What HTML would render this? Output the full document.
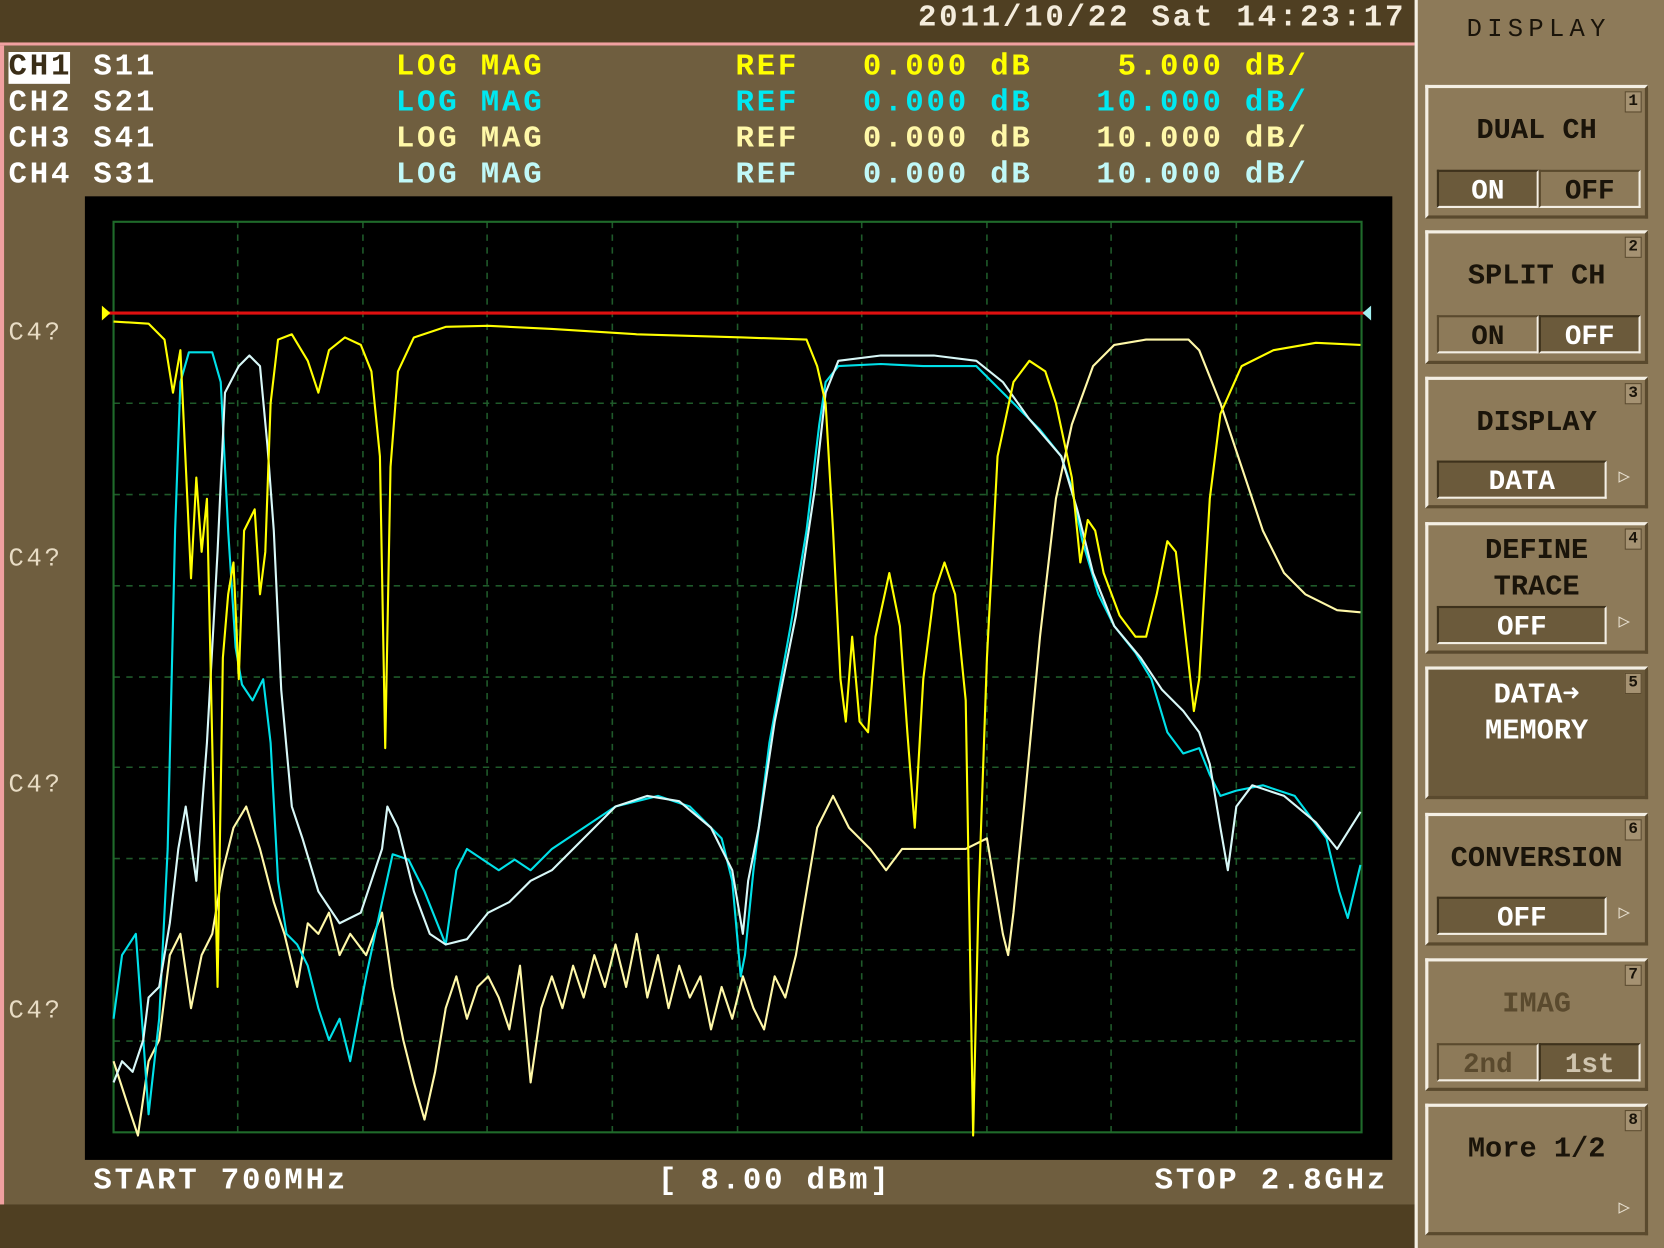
<!DOCTYPE html>
<html><head><meta charset="utf-8"><style>
html,body{margin:0;padding:0;width:1664px;height:1248px;overflow:hidden;background:#4f3f22}
#s{position:absolute;left:0;top:0;width:1568px;height:1176px;transform:scale(1.06122);transform-origin:0 0;font-family:"Liberation Mono",monospace;font-weight:bold}
.t{position:absolute;font-size:29px;line-height:34px;white-space:pre;letter-spacing:2.6px}
.box{position:absolute;left:1343px;width:210px;background:#8d7a59;border-top:3px solid #f4efe4;border-left:3px solid #f4efe4;border-right:3px solid #5a4a2e;border-bottom:3px solid #5a4a2e;box-sizing:border-box}
.box.dk{background:#6b5a3b}
.lbl{position:absolute;left:0;right:0;text-align:center;font-size:27px;color:#1a140a;line-height:34px}
.num{position:absolute;right:3px;top:3px;width:14px;height:18px;font-size:15px;line-height:18px;color:#1a140a;background:#a59272;border:1px solid #5a4a2e;text-align:center}
.btn{position:absolute;height:36px;font-size:26px;line-height:36px;text-align:center;box-sizing:border-box;color:#1a140a;background:#8d7a59;border-top:2px solid #5a4a2e;border-left:2px solid #5a4a2e;border-right:2px solid #f4efe4;border-bottom:2px solid #f4efe4}
.btn.on{background:#6b5a3b;color:#fff;border-top:2px solid #3e321c;border-left:2px solid #3e321c}
.arr{position:absolute;right:14px;font-size:18px;color:#e8e0d0}
</style></head><body><div id="s">
<div style="position:absolute;left:0;top:0;width:1336px;height:40px;background:#4f3f22"></div>
<div class="t" style="left:865px;top:0px;color:#f4ecdc">2011/10/22 Sat 14:23:17</div>
<div style="position:absolute;left:0;top:40px;width:1333px;height:3px;background:#f0a0a0"></div>
<div style="position:absolute;left:0;top:43px;width:4px;height:1092px;background:#f0a0a0"></div>
<div style="position:absolute;left:4px;top:43px;width:1329px;height:1092px;background:#6f5e3f"></div>
<div style="position:absolute;left:0;top:1135px;width:1336px;height:41px;background:#4f3f22"></div>
<div style="position:absolute;left:1333px;top:0;width:235px;height:1176px;background:#8d7a59;border-left:3px solid #f4efe4;box-sizing:border-box"></div>

<div style="position:absolute;left:8px;top:49px;width:58px;height:30px;background:#fff"></div>
<div class="t" style="left:8px;top:46px;color:#3a2e18">CH1</div>
<div class="t" style="left:8px;top:80px;color:#fff">CH2</div>
<div class="t" style="left:8px;top:114px;color:#fff">CH3</div>
<div class="t" style="left:8px;top:148px;color:#fff">CH4</div>
<div class="t" style="left:88px;top:46px;color:#fff">S11</div>
<div class="t" style="left:88px;top:80px;color:#fff">S21</div>
<div class="t" style="left:88px;top:114px;color:#fff">S41</div>
<div class="t" style="left:88px;top:148px;color:#fff">S31</div>
<div class="t" style="left:373px;top:46px;color:#ffff00">LOG MAG         REF   0.000 dB    5.000 dB/</div>
<div class="t" style="left:373px;top:80px;color:#00e8f0">LOG MAG         REF   0.000 dB   10.000 dB/</div>
<div class="t" style="left:373px;top:114px;color:#fff8a8">LOG MAG         REF   0.000 dB   10.000 dB/</div>
<div class="t" style="left:373px;top:148px;color:#c0f8f8">LOG MAG         REF   0.000 dB   10.000 dB/</div>

<div class="t" style="left:8px;top:298px;color:#e8dcc4;font-weight:normal;font-size:24px">C4?</div>
<div class="t" style="left:8px;top:511px;color:#e8dcc4;font-weight:normal;font-size:24px">C4?</div>
<div class="t" style="left:8px;top:724px;color:#e8dcc4;font-weight:normal;font-size:24px">C4?</div>
<div class="t" style="left:8px;top:937px;color:#e8dcc4;font-weight:normal;font-size:24px">C4?</div>

<svg style="position:absolute;left:0;top:0" width="1568" height="1176">
<rect x="80" y="185" width="1232" height="908" fill="#000"/>
<g stroke="#1f5a2a" stroke-width="1.5" stroke-dasharray="6 6" fill="none">
<path d="M224 209V1067M342 209V1067M459 209V1067M577 209V1067M695 209V1067M812 209V1067M930 209V1067M1047 209V1067M1165 209V1067M107 295H1283M107 380H1283M107 466H1283M107 552H1283M107 638H1283M107 723H1283M107 809H1283M107 895H1283M107 981H1283"/>
</g>
<rect x="107" y="209" width="1176" height="858" stroke="#1f6a2a" stroke-width="2" fill="none"/>
<line x1="100" y1="295" x2="1288" y2="295" stroke="#e01010" stroke-width="3"/>
<path d="M96 288L104 295L96 302Z" fill="#ffff00"/><path d="M1292 288L1284 295L1292 302Z" fill="#a0f0f0"/>
<g fill="none" stroke-width="2" stroke-linejoin="round">
<polyline stroke="#fff8a8" points="107,1000 120,1040 130,1070 140,1000 150,980 160,900 170,880 180,950 190,900 200,880 210,820 220,780 232,760 245,800 258,850 268,880 280,930 290,870 300,880 310,860 320,900 330,880 345,900 360,860 370,930 380,980 390,1020 400,1055 410,1010 420,950 430,920 440,960 450,930 460,920 470,940 480,970 490,910 500,1020 510,950 520,920 530,950 540,910 550,940 560,900 570,930 580,890 590,930 600,880 610,940 620,900 630,950 640,910 650,940 660,920 670,970 680,930 690,960 700,920 710,950 720,970 730,920 740,940 750,900 760,840 770,780 785,750 800,780 820,800 835,820 850,800 870,800 890,800 910,800 930,790 945,880 950,900 955,860 965,760 980,600 995,470 1010,400 1030,345 1050,325 1080,320 1120,320 1130,330 1150,380 1170,440 1190,500 1210,540 1230,560 1260,575 1282,577"/>
<polyline stroke="#00e0e8" points="107,960 115,900 128,880 133,950 140,1050 150,960 158,800 165,500 170,360 178,332 200,332 208,360 215,500 222,610 228,645 238,660 248,640 255,700 262,830 270,880 280,890 290,910 300,950 310,980 320,960 330,1000 345,920 360,850 370,805 385,810 400,840 420,890 430,820 440,800 455,810 470,820 485,810 500,820 520,800 550,780 580,760 620,750 650,760 680,790 690,830 698,920 702,900 710,820 725,700 745,590 760,500 772,400 778,360 790,345 830,343 870,345 920,345 940,365 960,385 980,405 1000,430 1010,460 1020,510 1035,560 1050,590 1070,615 1085,640 1100,690 1115,710 1130,705 1140,730 1150,750 1165,745 1190,740 1220,750 1250,790 1262,840 1270,865 1282,815"/>
<polyline stroke="#d8f8f8" points="107,1020 115,1000 125,1010 135,980 140,940 150,930 160,870 168,800 175,760 185,830 195,700 205,520 212,370 225,345 235,335 245,345 252,420 258,500 265,650 275,760 285,790 300,840 320,870 340,860 360,800 365,760 375,780 390,840 405,880 420,890 440,885 460,860 480,850 500,830 520,820 550,790 580,760 610,750 640,755 670,780 690,820 700,880 705,830 715,780 730,680 750,580 768,460 778,370 790,340 830,335 880,335 920,340 945,360 970,395 1000,430 1015,480 1030,540 1050,590 1075,620 1095,650 1115,670 1130,690 1140,720 1150,780 1157,820 1165,760 1180,740 1210,750 1240,775 1260,800 1282,765"/>
<polyline stroke="#ffff00" points="107,303 140,305 155,320 163,370 170,330 180,545 185,450 190,520 195,470 200,700 205,930 210,620 215,560 220,530 225,640 230,500 240,480 245,560 250,520 255,380 262,320 275,315 290,340 300,370 310,330 325,318 340,325 350,350 358,430 363,705 368,440 375,350 390,318 420,308 460,307 520,310 600,315 700,318 760,320 770,345 778,380 785,500 792,640 797,680 803,600 810,680 818,690 825,600 838,540 848,590 855,690 862,780 870,640 880,560 890,530 900,560 910,660 917,1070 922,850 930,620 940,430 955,360 970,340 985,350 995,380 1010,450 1018,530 1025,490 1032,500 1040,540 1055,580 1070,600 1080,600 1090,560 1100,510 1108,520 1115,580 1125,670 1130,640 1140,470 1150,390 1170,345 1200,330 1240,323 1282,325"/>
</g>
</svg>
<div class="t" style="left:88px;top:1096px;color:#fff">START 700MHz</div>
<div class="t" style="left:620px;top:1096px;color:#fff">[ 8.00 dBm]</div>
<div class="t" style="left:1088px;top:1096px;color:#fff">STOP 2.8GHz</div>

<div class="t" style="left:1382px;top:12px;color:#1a140a;font-weight:normal;font-size:24px;letter-spacing:5px">DISPLAY</div>

<div class="box" style="top:80px;height:126px"><div class="num">1</div><div class="lbl" style="top:24px">DUAL CH</div>
<div class="btn on" style="left:8px;top:77px;width:96px">ON</div><div class="btn" style="left:104px;top:77px;width:96px">OFF</div></div>
<div class="box" style="top:217px;height:126px"><div class="num">2</div><div class="lbl" style="top:24px">SPLIT CH</div>
<div class="btn" style="left:8px;top:77px;width:96px">ON</div><div class="btn on" style="left:104px;top:77px;width:96px">OFF</div></div>
<div class="box" style="top:355px;height:124px"><div class="num">3</div><div class="lbl" style="top:24px">DISPLAY</div>
<div class="btn on" style="left:8px;top:76px;width:160px">DATA</div><div class="arr" style="top:80px">▷</div></div>
<div class="box" style="top:492px;height:124px"><div class="num">4</div><div class="lbl" style="top:8px">DEFINE<br>TRACE</div>
<div class="btn on" style="left:8px;top:76px;width:160px">OFF</div><div class="arr" style="top:80px">▷</div></div>
<div class="box dk" style="top:628px;height:125px"><div class="num">5</div><div class="lbl" style="top:8px;color:#fff">DATA➜<br>MEMORY</div></div>
<div class="box" style="top:766px;height:125px"><div class="num">6</div><div class="lbl" style="top:24px">CONVERSION</div>
<div class="btn on" style="left:8px;top:76px;width:160px">OFF</div><div class="arr" style="top:80px">▷</div></div>
<div class="box" style="top:903px;height:125px"><div class="num">7</div><div class="lbl" style="top:24px;color:#5a4a2e">IMAG</div>
<div class="btn" style="left:8px;top:77px;width:96px;color:#5a4a2e">2nd</div><div class="btn on" style="left:104px;top:77px;width:96px;color:#cfc4ae">1st</div></div>
<div class="box" style="top:1040px;height:124px"><div class="num">8</div><div class="lbl" style="top:24px">More 1/2</div><div class="arr" style="top:84px">▷</div></div>
</div></body></html>
